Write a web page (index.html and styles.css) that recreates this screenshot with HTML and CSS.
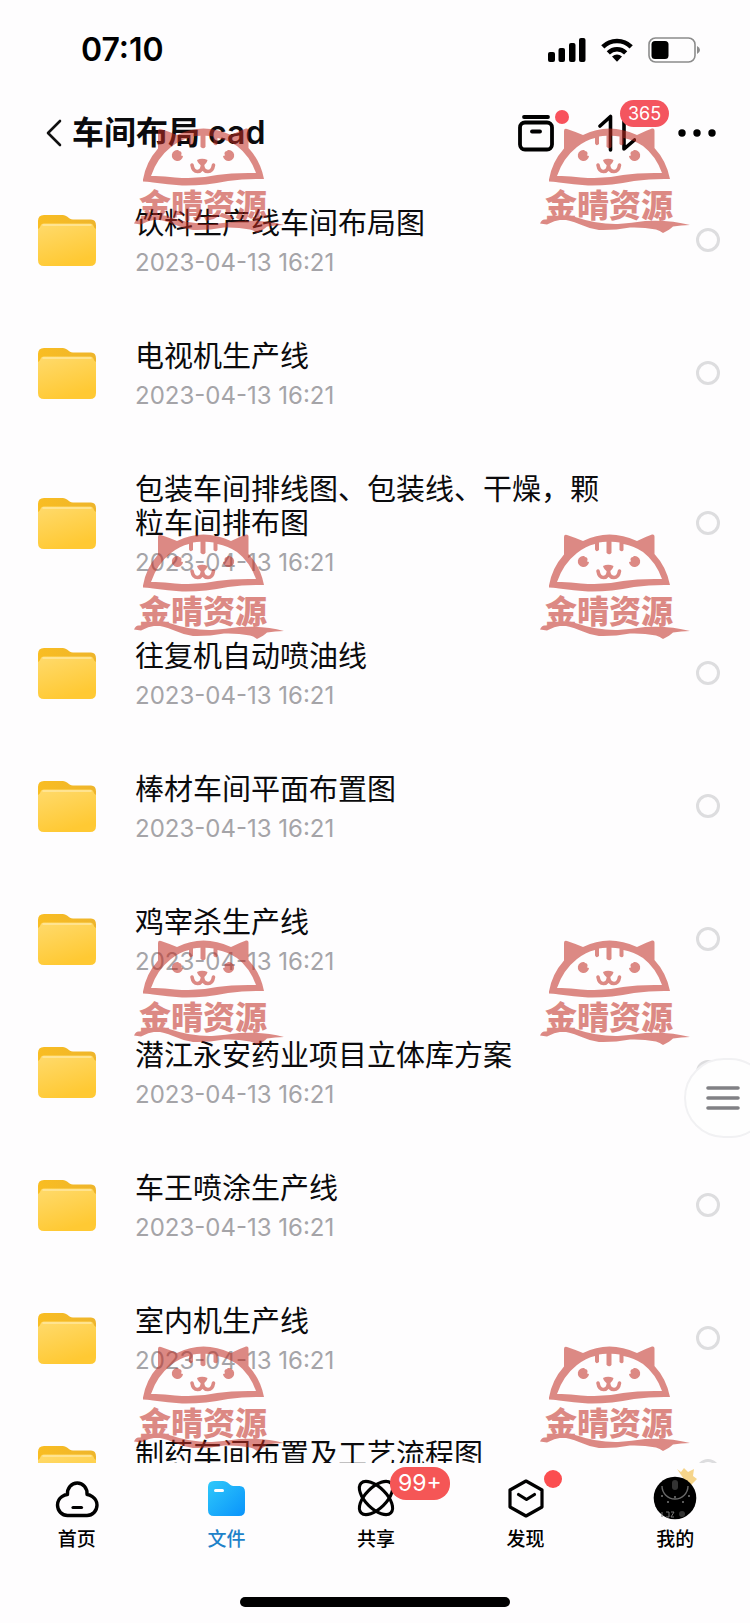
FILE: index.html
```html
<!DOCTYPE html>
<html lang="zh-CN">
<head>
<meta charset="utf-8">
<meta name="viewport" content="width=device-width, initial-scale=1">
<title>车间布局 cad</title>
<link rel="stylesheet" href="styles.css">
</head>
<body>
<svg class="defs" aria-hidden="true">
  <defs>
    <linearGradient id="folder-back" x1="0" y1="0" x2="1" y2="0"><stop offset="0" stop-color="#f9bd22"/><stop offset="1" stop-color="#eeb52c"/></linearGradient>
    <linearGradient id="folder-front" x1="0" y1="0" x2="0.4" y2="1"><stop offset="0" stop-color="#ffda6c"/><stop offset="1" stop-color="#ffc933"/></linearGradient>
    <linearGradient id="file-blue" x1="0" y1="0" x2="1" y2="1"><stop offset="0" stop-color="#2fc9fa"/><stop offset="1" stop-color="#0a93fb"/></linearGradient>
    <symbol id="folder" viewBox="0 0 60 54">
      <path d="M1 8q0-6 6-6h19q2 0 4 1.500l3 2.200q1 .8 3 .8h18q5 0 5 6v8H1z" fill="url(#folder-back)"/>
      <path d="M1 16q2-1 2.500-3 .5-2.500 3.500-2.500h46q3 0 3.500 2.500 .5 2 2.500 3v31q0 6-6 6H7q-6 0-6-6z" fill="url(#folder-front)"/>
      <path d="M6 12h48" stroke="#ffe7a0" stroke-width="1.500" stroke-linecap="round"/>
    </symbol>
    <symbol id="cat" viewBox="0 0 150 106">
      <path fill-rule="evenodd" d="M9 51.500Q12 34 24 20.500V3q0-3 3-2 9 3 16 6 26-13 54 0 8-4 15-6.500 2.500-.5 2.500 2V20q12 13 15.500 31-18-.5-36 2-25 5-46 4.500-14-1-29-3-7-1-10-1zM17 48q11-.5 24 1.500 22 2 42-2.500 16-2.500 39-2-6-17-19-27-9-6-19.500-8v6q-1.500 2.500-4 0v-7.500q-4-.8-8-.8v11q-2 3-5 0v-11q-4 0-7.500.9v7.400q-2.500 2.500-4-.5v-5.500q-9 2-18 9-14 11-20 29z"/>
      <path d="M44.500 22A5.600 5.600 0 1 0 49 28Q45 27.500 44.500 22z"/>
      <path d="M93.500 22A5.600 5.600 0 1 1 89 28Q93 27.500 93.500 22z"/>
      <circle cx="45" cy="25.500" r="2.500"/><circle cx="93" cy="25.500" r="2.500"/>
      <path d="M63 32q5-2.500 10.500 0-1 4-5 6-4.500-2-5.500-6z"/>
      <path d="M58 37q1 6.500 5.500 6.500 4.500 0 5-6.500 .5 6.500 5.500 6.500 4.500 0 5.500-6.500" fill="none" stroke="#c12c21" stroke-width="3.600" stroke-linecap="round"/>
      <path d="M0 95.500q2-4.500 5-4 8 0 14-3.500 8-2 18 1.500 20 7 41 6.500 14-1 27-3 24-1.500 45 4-9 0-17 1.500-3 3-10 6.500-3-2.500-7-3.500-13-2.500-26-2-16 3-31 2.500-10-1.500-20-6-9-4-17-4.500-8 1-15 5z"/>
    </symbol>
  </defs>
</svg>

<div class="app">
  <header>
    <div class="status">
      <time class="clock">07:10</time>
      <div class="signals">
        <svg class="signal" viewBox="0 0 38 24"><rect y="14" width="7" height="10" rx="2"/><rect x="10.500" y="10" width="6.500" height="14" rx="2"/><rect x="21" y="5" width="6.500" height="19" rx="2"/><rect x="31" width="6.500" height="24" rx="2"/></svg>
        <svg class="wifi" viewBox="0 0 32 24"><g fill="none" stroke="#000" stroke-width="4.500"><path d="M1.800 8.800a20 20 0 0 1 28.400 0"/><path d="M7.300 14.800a12.300 12.300 0 0 1 17.400 0"/></g><path d="M11 18.500q5-4 10 0l-5 5.300z"/></svg>
        <svg class="battery" viewBox="0 0 52 26"><rect x="1" y="1" width="46" height="24" rx="6.500" fill="none" stroke="#8c8c8c" stroke-width="1.600"/><rect x="3.500" y="4" width="17" height="18" rx="3.500"/><path d="M49 9q3 1.500 3 4t-3 4z" fill="#8c8c8c"/></svg>
      </div>
    </div>
    <div class="nav">
      <button class="icon-button back" aria-label="返回"><svg viewBox="0 0 18 28"><path d="M15 2 3 14l12 12" fill="none" stroke="#111" stroke-width="2.600" stroke-linecap="round" stroke-linejoin="round"/></svg></button>
      <h1>车间布局 cad</h1>
      <button class="icon-button" aria-label="传输"><svg class="tool" viewBox="0 0 38 38"><g fill="none" stroke="#000" stroke-width="3.800" stroke-linecap="round"><path d="M6 3h24"/><rect x="2" y="8.500" width="32" height="27" rx="5"/><path d="M14 17.500h8"/></g></svg><span class="dot"></span></button>
      <button class="icon-button" aria-label="排序"><svg class="tool" viewBox="0 0 38 38"><path d="M2 12 12.500 2.500V36M26 3v32L36.500 26" fill="none" stroke="#000" stroke-width="3.600" stroke-linecap="round" stroke-linejoin="round"/></svg><span class="badge">365</span></button>
      <button class="icon-button" aria-label="更多"><svg class="tool" viewBox="0 0 38 38"><circle cx="4" cy="19" r="3.700"/><circle cx="19" cy="19" r="3.700"/><circle cx="34" cy="19" r="3.700"/></svg></button>
    </div>
  </header>

  <main class="list">
    <label class="row"><svg class="folder"><use href="#folder"/></svg><span class="info"><span class="name">饮料生产线车间布局图</span><time>2023-04-13 16:21</time></span><input type="checkbox"></label>
    <label class="row"><svg class="folder"><use href="#folder"/></svg><span class="info"><span class="name">电视机生产线</span><time>2023-04-13 16:21</time></span><input type="checkbox"></label>
    <label class="row"><svg class="folder"><use href="#folder"/></svg><span class="info"><span class="name">包装车间排线图、包装线、干燥，颗粒车间排布图</span><time>2023-04-13 16:21</time></span><input type="checkbox"></label>
    <label class="row"><svg class="folder"><use href="#folder"/></svg><span class="info"><span class="name">往复机自动喷油线</span><time>2023-04-13 16:21</time></span><input type="checkbox"></label>
    <label class="row"><svg class="folder"><use href="#folder"/></svg><span class="info"><span class="name">棒材车间平面布置图</span><time>2023-04-13 16:21</time></span><input type="checkbox"></label>
    <label class="row"><svg class="folder"><use href="#folder"/></svg><span class="info"><span class="name">鸡宰杀生产线</span><time>2023-04-13 16:21</time></span><input type="checkbox"></label>
    <label class="row"><svg class="folder"><use href="#folder"/></svg><span class="info"><span class="name">潜江永安药业项目立体库方案</span><time>2023-04-13 16:21</time></span><input type="checkbox"></label>
    <label class="row"><svg class="folder"><use href="#folder"/></svg><span class="info"><span class="name">车王喷涂生产线</span><time>2023-04-13 16:21</time></span><input type="checkbox"></label>
    <label class="row"><svg class="folder"><use href="#folder"/></svg><span class="info"><span class="name">室内机生产线</span><time>2023-04-13 16:21</time></span><input type="checkbox"></label>
    <label class="row"><svg class="folder"><use href="#folder"/></svg><span class="info"><span class="name">制药车间布置及工艺流程图</span></span><input type="checkbox"></label>
  </main>

  <footer>
    <nav class="tabs">
      <a href="#home"><span class="tab-icon"><svg viewBox="0 0 44 44"><path d="M12.500 18.500a9.800 10.500 0 1 1 19.500 0c1 0 10 2 10 10.500 0 6-4.500 10.500-10 10.500H12.500C7 39.500 2.500 35 2.500 29c0-8.500 8.500-10.500 10-10.500z" fill="none" stroke="#000" stroke-width="3.400" stroke-linejoin="round"/><path d="M18 31.500h8.500" stroke="#000" stroke-width="3.200" stroke-linecap="round"/></svg></span>首页</a>
      <a href="#files" class="active" aria-current="page"><span class="tab-icon"><svg viewBox="0 0 44 44"><path d="M4 11q0-6 6-6h9q2.500 0 4.500 1.600l3 2.400q1.500 1 3 1h6q5.500 0 5.500 6v18q0 6-6 6H10q-6 0-6-6z" fill="url(#file-blue)"/><path d="M11.500 14.500h7" stroke="#fff" stroke-width="3" stroke-linecap="round"/></svg></span>文件</a>
      <a href="#share"><span class="tab-icon"><svg viewBox="0 0 44 44"><g fill="none" stroke="#000" stroke-width="3.100"><ellipse cx="22" cy="22" rx="21" ry="10.500" transform="rotate(45 22 22)"/><ellipse cx="22" cy="22" rx="21" ry="10.500" transform="rotate(-45 22 22)"/></g></svg><span class="badge large">99+</span></span>共享</a>
      <a href="#discover"><span class="tab-icon"><svg viewBox="0 0 44 44"><path d="m22 5 16 9v17L22 40 6 31V14z" fill="none" stroke="#000" stroke-width="3.200" stroke-linejoin="round"/><path d="m14.500 18.500 8 5 8-5" fill="none" stroke="#000" stroke-width="3.200" stroke-linecap="round" stroke-linejoin="round"/></svg><span class="dot large"></span></span>发现</a>
      <a href="#mine"><span class="tab-icon"><svg viewBox="0 0 44 44"><path d="m24-7 4 3 3-4 4 4 6-3-1 7 4 3-5 5-2 4z" fill="#f6d58b"/><circle cx="22" cy="22" r="21.300"/><path d="M9 10a13 13 0 1 0 26 0" fill="none" stroke="#686868" stroke-width="1.400"/><rect x="19" y="4" width="6" height="10" rx="3" fill="#333"/><path d="M8 20h2M14 26h2M29 26h2M35 20h2M22 20v2" stroke="#777" stroke-width="1.500"/><circle cx="29" cy="38" r="3" fill="#333"/><path d="M9 36v5M13 36h3v5h-3M18 36h3l-3 5h3" fill="none" stroke="#777" stroke-width="1"/></svg></span>我的</a>
    </nav>
    <div class="home-bar"></div>
  </footer>

  <button class="fab" aria-label="菜单"><svg viewBox="0 0 34 24"><path d="M2 2h30M2 12h30M2 22h30" stroke="#808084" stroke-width="3.600" stroke-linecap="round"/></svg></button>

  <div class="marks">
    <div class="mark"><svg><use href="#cat"/></svg><span>金晴资源</span></div>
    <div class="mark"><svg><use href="#cat"/></svg><span>金晴资源</span></div>
    <div class="mark"><svg><use href="#cat"/></svg><span>金晴资源</span></div>
    <div class="mark"><svg><use href="#cat"/></svg><span>金晴资源</span></div>
    <div class="mark"><svg><use href="#cat"/></svg><span>金晴资源</span></div>
    <div class="mark"><svg><use href="#cat"/></svg><span>金晴资源</span></div>
    <div class="mark"><svg><use href="#cat"/></svg><span>金晴资源</span></div>
    <div class="mark"><svg><use href="#cat"/></svg><span>金晴资源</span></div>
  </div>
</div>
</body>
</html>
```
FILE: styles.css
```css
* { box-sizing: border-box; }

body {
  margin: 0;
  background: #fefdfe;
  color: #0b0b0d;
  font-family: Inter, "Noto Sans CJK SC", sans-serif;
}

svg { display: block; }

.defs { position: absolute; width: 0; height: 0; }

.app {
  position: relative;
  display: flex;
  flex-direction: column;
  height: 100vh;
  overflow: hidden;
}

.status {
  display: flex;
  align-items: center;
  justify-content: space-between;
  height: 100px;
  padding: 0 50px 0 81px;
}

.clock { font-size: 32px; font-weight: 600; line-height: 40px; color: #000; }

.signals { display: flex; align-items: center; gap: 15px; }
.signal { width: 38px; height: 24px; }
.wifi { width: 32px; height: 24px; }
.battery { width: 52px; height: 26px; }

.nav {
  display: flex;
  align-items: center;
  gap: 42px;
  height: 73px;
  padding: 0 34px 7px 45px;
}

h1 {
  flex: 1;
  margin: 0 0 0 -33px;
  font-size: 32px;
  font-weight: 600;
  line-height: 40px;
}

.icon-button {
  position: relative;
  padding: 0;
  border: 0;
  background: none;
  font-family: inherit;
}

.back svg { width: 18px; height: 28px; }
.tool { width: 38px; height: 38px; }

.dot {
  position: absolute;
  top: -4px;
  left: 37px;
  width: 14px;
  height: 14px;
  border-radius: 50%;
  background: #f8525c;
}

.dot.large { top: -6px; left: 40px; width: 18px; height: 18px; background: #fb4e50; }

.badge {
  position: absolute;
  top: -14px;
  left: 22px;
  padding: 0 8px;
  border-radius: 16px;
  background: #f4555f;
  color: #fff;
  font-size: 18px;
  line-height: 27px;
}

.badge.large {
  top: -9px;
  left: 36px;
  background: #f55656;
  font-size: 23px;
  font-weight: 400;
  line-height: 33px;
}

.list { flex: 1; min-height: 0; overflow: hidden; }

.row {
  display: flex;
  align-items: center;
  padding: 34px 30px 33px 37px;
}

.folder { flex: none; width: 60px; height: 54px; margin-right: 38px; }

.info {
  display: flex;
  flex: 1;
  flex-direction: column;
  gap: 12px;
  min-height: 66px;
}

.name { max-width: 480px; font-size: 29px; line-height: 34px; }

.row time { color: #a5a4a8; font-size: 24px; font-weight: 400; line-height: 20px; }

.row input {
  width: 24px;
  height: 24px;
  margin: 0;
  border: 3px solid #dddddf;
  border-radius: 50%;
  appearance: none;
}

footer { height: 160px; }

.tabs { display: flex; padding: 13px 0 0 2px; }

.tabs a {
  display: flex;
  flex: 1;
  flex-direction: column;
  align-items: center;
  gap: 6px;
  color: #000;
  font-size: 19px;
  font-weight: 500;
  line-height: 28px;
  text-decoration: none;
}

.tabs .active { color: #1d82c9; }

.tab-icon { position: relative; }
.tab-icon svg { width: 44px; height: 44px; overflow: visible; }

.home-bar {
  width: 36%;
  height: 10px;
  margin: 43px auto 0;
  border-radius: 5px;
  background: #000;
}

.fab {
  position: absolute;
  top: 1058px;
  right: -20px;
  width: 86px;
  height: 80px;
  padding: 0 0 0 20px;
  border: 2px solid #f1f1f3;
  border-radius: 40px;
  background: #fefefe;
}

.fab svg { width: 34px; height: 24px; }

.marks {
  position: absolute;
  inset: 128px 60px auto 134px;
  display: grid;
  grid-template-columns: 150px 150px;
  justify-content: space-between;
  row-gap: 300px;
  pointer-events: none;
}

.mark {
  position: relative;
  height: 106px;
  opacity: 0.55;
  color: #c12c21;
  fill: #c12c21;
}

.mark svg { width: 150px; height: 106px; }

.mark span {
  position: absolute;
  top: 60px;
  left: 5px;
  font-size: 32px;
  font-weight: 900;
  line-height: 36px;
}
```
